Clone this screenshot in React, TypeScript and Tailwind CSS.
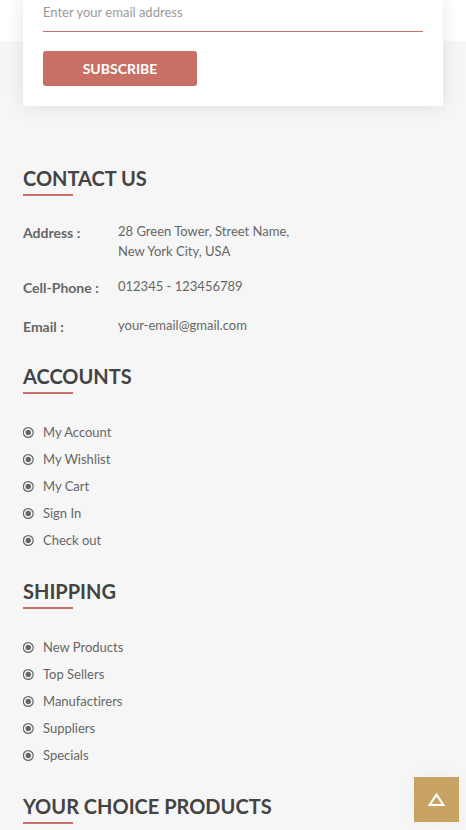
import type { ReactNode } from 'react';

const contacts = [
  { label: 'Address :', value: <>28 Green Tower, Street Name,<br />New York City, USA</> },
  { label: 'Cell-Phone :', value: '012345 - 123456789' },
  { label: 'Email :', value: <a href="mailto:your-email@gmail.com">your-email@gmail.com</a> },
];

const accountLinks = ['My Account', 'My Wishlist', 'My Cart', 'Sign In', 'Check out'];
const shippingLinks = ['New Products', 'Top Sellers', 'Manufactirers', 'Suppliers', 'Specials'];

function FooterTitle({ children }: { children: ReactNode }) {
  return (
    <h2 className="text-[20px] leading-8 font-bold text-[#434343] uppercase after:block after:h-0.5 after:w-[50px] after:bg-[#c87065]">
      {children}
    </h2>
  );
}

function DotIcon() {
  return (
    <svg className="size-[11px] shrink-0" viewBox="0 0 11 11" aria-hidden="true">
      <circle cx="5.25" cy="5.5" r="4.9" fill="none" stroke="currentColor" strokeWidth="1.2" />
      <circle cx="5.25" cy="5.5" r="2.7" fill="currentColor" />
    </svg>
  );
}

function LinkList({ title, links }: { title: string; links: string[] }) {
  return (
    <section>
      <FooterTitle>{title}</FooterTitle>
      <ul className="mt-[25px]">
        {links.map((link) => (
          <li key={link}>
            <a href="#" className="flex items-center gap-[9px] text-[13px] leading-[27px] hover:text-[#c87065]">
              <DotIcon />
              {link}
            </a>
          </li>
        ))}
      </ul>
    </section>
  );
}

export default function App() {
  return (
    <div className="bg-[#f6f6f6] font-['Lato',sans-serif] text-[13px] leading-5 text-[#666666] [font-variant-ligatures:no-common-ligatures]">
      <div className="flow-root bg-white px-[23px]">
        <form
          className="relative -mb-[65px] bg-white px-5 pb-5 shadow-[0_0_18px_rgba(0,0,0,0.1)]"
          onSubmit={(e) => e.preventDefault()}
        >
          <input
            type="email"
            aria-label="Email address"
            placeholder="Enter your email address"
            className="block h-8 w-full border-b border-[#c87065] pb-2 outline-none placeholder:text-[#999999]"
          />
          <button type="submit" className="mt-[19px] block h-[35px] w-[154px] rounded-[3px] bg-[#c87065] text-sm font-bold text-white uppercase">
            Subscribe
          </button>
        </form>
      </div>

      <footer className="flex flex-col gap-[21px] px-[23px] pt-[121px] pb-1.5">
        <section>
          <FooterTitle>Contact us</FooterTitle>
          <dl className="mt-[25px] flex flex-col gap-[15px]">
            {contacts.map(({ label, value }) => (
              <div key={label} className="flex">
                <dt className="h-6 w-[95px] shrink-0 text-sm leading-6 font-bold">{label}</dt>
                <dd>{value}</dd>
              </div>
            ))}
          </dl>
        </section>
        <LinkList title="Accounts" links={accountLinks} />
        <LinkList title="Shipping" links={shippingLinks} />
        <section>
          <FooterTitle>Your choice products</FooterTitle>
        </section>
      </footer>

      <button
        type="button"
        aria-label="Back to top"
        className="fixed right-[7px] bottom-2 flex size-[45px] items-center justify-center bg-[#c9a363] text-white shadow-[0_0_18px_rgba(0,0,0,0.04)]"
      >
        <svg className="h-[15px] w-[19px]" viewBox="0 0 19 15" aria-hidden="true">
          <path d="M9.5 2.6 L16.4 13 H2.6 Z" fill="none" stroke="currentColor" strokeWidth="2" />
        </svg>
      </button>
    </div>
  );
}
